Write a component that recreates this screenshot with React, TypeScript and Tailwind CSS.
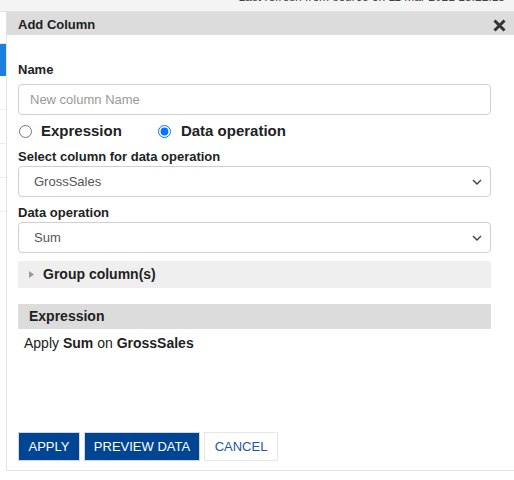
import React from "react";

function Chevron() {
  return (
    <svg width="10" height="6" viewBox="0 0 10 6" className="shrink-0">
      <path d="M1 1 L5 5 L9 1" fill="none" stroke="#444" strokeWidth="1.4" />
    </svg>
  );
}

function SelectBox({ value }: { value: string }) {
  return (
    <div className="flex h-[31px] w-[473px] items-center justify-between rounded-[4px] border border-[#d0d0d0] bg-white pl-[15px] pr-[8px] text-[13px] text-[#555]">
      <span>{value}</span>
      <Chevron />
    </div>
  );
}

export default function App() {
  return (
    <div className="relative h-[480px] w-[514px] overflow-hidden bg-white text-[#222]" style={{ fontFamily: '"Liberation Sans", Arial, sans-serif' }}>
      {/* top strip */}
      <div className="flex h-[12px] justify-end overflow-hidden border-b border-[#e2e2e2] bg-[#f4f4f4] pr-[9px]">
        <span className="mt-[-10px] text-[12px] leading-[15px] text-[#444]">Last refresh from source on 11 Mar 2021 18:22:18</span>
      </div>
      <div className="flex">
        {/* left page sliver */}
        <div className="flex w-[6px] shrink-0 flex-col">
          <div className="h-[32px] border-b border-[#e5e5e5]" />
          <div className="h-[32px] bg-[#1a7fe0]" />
          <div className="h-[34px] border-b border-[#ececec]" />
          <div className="h-[34px] border-b border-[#ececec]" />
          <div className="h-[34px] border-b border-[#ececec]" />
          <div className="h-[34px] border-b border-[#ececec]" />
        </div>
        {/* dialog */}
        <div className="flex h-[459px] flex-1 flex-col border-b border-l border-[#e3e3e3] bg-white">
          <div className="flex h-[23px] items-center justify-between bg-[#dcdcdc] pl-[11px] pr-[8px] pt-[3px]">
            <span className="text-[13px] font-bold text-[#222]">Add Column</span>
            <svg width="13" height="13" viewBox="0 0 13 13">
              <path d="M1.5 1.5 L11.5 11.5 M11.5 1.5 L1.5 11.5" stroke="#333" strokeWidth="3" strokeLinecap="butt" />
            </svg>
          </div>
          <div className="flex flex-col pl-[11px]">
            <div className="mt-[27px] text-[13px] font-bold leading-[15px]">Name</div>
            <div className="mt-[7px] flex h-[31px] w-[473px] items-center rounded-[4px] border border-[#d0d0d0] pl-[11px] text-[13px] text-[#999]">
              New column Name
            </div>
            <div className="mt-[7px] flex h-[18px] items-center text-[15px] font-bold">
              <input type="radio" readOnly className="ml-[1px] h-[13px] w-[13px]" name="t" />
              <span className="ml-[9px]">Expression</span>
              <input type="radio" readOnly checked className="ml-[36px] h-[13px] w-[13px]" name="t" />
              <span className="ml-[10px]">Data operation</span>
            </div>
            <div className="mt-[9px] text-[13px] font-bold leading-[15px]">Select column for data operation</div>
            <div className="mt-[2px]">
              <SelectBox value="GrossSales" />
            </div>
            <div className="mt-[8px] text-[13px] font-bold leading-[15px]">Data operation</div>
            <div className="mt-[2px]">
              <SelectBox value="Sum" />
            </div>
            <div className="mt-[8px] flex h-[27px] w-[473px] items-center bg-[#efefef] pl-[11px]">
              <svg width="5" height="7" viewBox="0 0 5 7">
                <path d="M0 0 L5 3.5 L0 7 Z" fill="#9a9a9a" />
              </svg>
              <span className="ml-[9px] text-[14px] font-bold">Group column(s)</span>
            </div>
            <div className="mt-[16px] flex h-[25px] w-[473px] items-center bg-[#dcdcdc] pl-[11px]">
              <span className="text-[14px] font-bold">Expression</span>
            </div>
            <div className="mt-[6px] pl-[6px] text-[14px] leading-[16px]">
              Apply <b>Sum</b> on <b>GrossSales</b>
            </div>
            <div className="mt-[81px] flex gap-[4px] text-[13px]">
              <div className="flex h-[29px] w-[62px] items-center justify-center border border-[#d6d6d6] bg-[#004593] text-white">APPLY</div>
              <div className="flex h-[29px] w-[116px] items-center justify-center border border-[#d6d6d6] bg-[#004593] text-white">PREVIEW DATA</div>
              <div className="flex h-[29px] w-[74px] items-center justify-center border border-[#e6e6e6] bg-white text-[#2556a4]">CANCEL</div>
            </div>
          </div>
        </div>
      </div>
    </div>
  );
}
